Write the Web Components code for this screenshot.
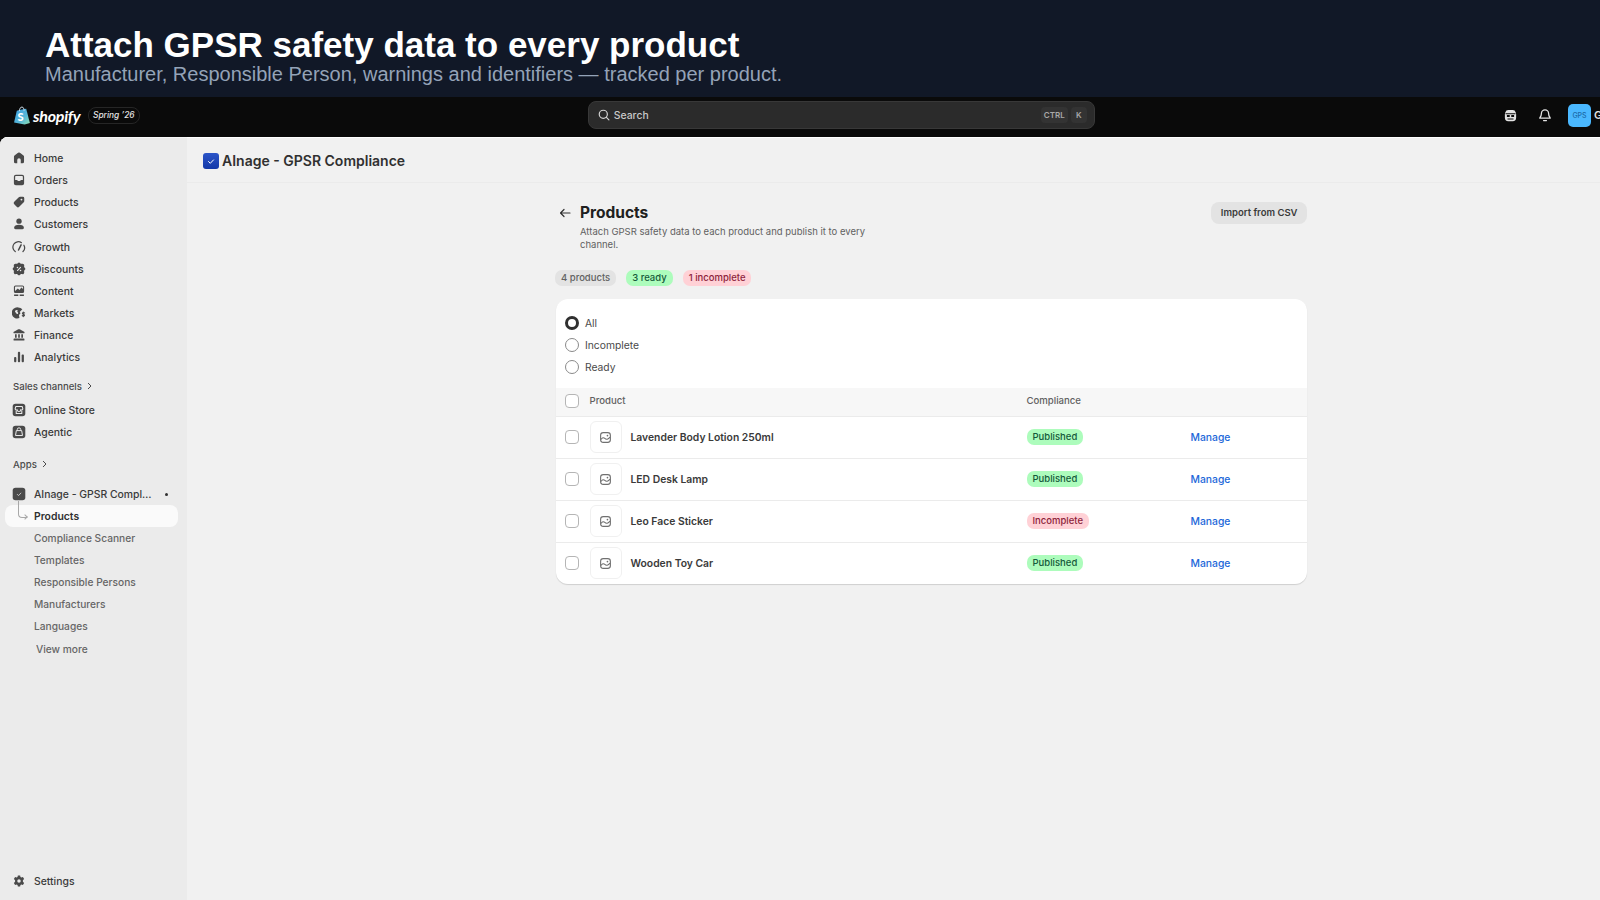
<!doctype html>
<html lang="en">
<head>
<meta charset="utf-8">
<title>GPSR Products</title>
<style>
  html, body { margin: 0; height: 100%; overflow: hidden; background: #0a0a0a; }
  body { font-family: Inter, "Liberation Sans", sans-serif; }
</style>
</head>
<body>
  <promo-banner heading="Attach GPSR safety data to every product" sub="Manufacturer, Responsible Person, warnings and identifiers — tracked per product."></promo-banner>
  <admin-topbar></admin-topbar>
  <admin-shell>
    <admin-nav slot="nav"></admin-nav>
    <app-title></app-title>
    <products-page></products-page>
  </admin-shell>

<script>
  const ICONS = {
    home: '<path fill="currentColor" d="M8.6 2.6a2.2 2.2 0 0 1 2.8 0l5 4a2.2 2.2 0 0 1 .8 1.7v7A2.2 2.2 0 0 1 15 17.500h-2.500v-4.500a2.500 2.500 0 0 0-5 0v4.500H5a2.200 2.200 0 0 1-2.200-2.200v-7a2.200 2.200 0 0 1 .8-1.700z"/>',
    orders: '<path fill="currentColor" fill-rule="evenodd" d="M5.500 2.500h9A2.800 2.800 0 0 1 17.300 5.300v9.400a2.800 2.800 0 0 1-2.800 2.800h-9a2.800 2.800 0 0 1-2.800-2.800V5.300A2.800 2.800 0 0 1 5.500 2.500zm-1 7.500h3l.8 1.500h3.400l.8-1.500h3V5.300a1 1 0 0 0-1-1h-9a1 1 0 0 0-1 1z"/>',
    tag: '<path fill="currentColor" fill-rule="evenodd" d="M11.500 2.500H15.500a2 2 0 0 1 2 2v4a2.500 2.500 0 0 1-.7 1.800l-6.500 6.500a2.500 2.500 0 0 1-3.600 0l-3.500-3.500a2.500 2.500 0 0 1 0-3.600l6.500-6.500a2.500 2.500 0 0 1 1.800-.7zm2 5.400a1.300 1.300 0 1 0 0-2.700 1.300 1.300 0 0 0 0 2.700z"/>',
    person: '<circle cx="10" cy="6" r="3.800" fill="currentColor"/><path fill="currentColor" d="M3 15.500c0-3 2.800-4.500 7-4.500s7 1.500 7 4.500c0 1.200-.8 2-2 2H5c-1.200 0-2-.8-2-2z"/>',
    gauge: '<path fill="none" stroke="currentColor" stroke-width="1.800" stroke-linecap="round" d="M4.600 16.500A7.500 7.500 0 0 1 13.500 3.800M17 7.500a7.500 7.500 0 0 1-1.300 9"/><path fill="none" stroke="currentColor" stroke-width="2.200" stroke-linecap="round" d="M9.300 14.300 13 7"/>',
    discount: '<path fill="currentColor" fill-rule="evenodd" d="M8.300 1.700a2.400 2.400 0 0 1 3.400 0l1 .9 1.800-.1a2.400 2.400 0 0 1 2.900 2.900l-.1 1.800.9 1a2.400 2.400 0 0 1 0 3.400l-.9 1 .1 1.800a2.400 2.400 0 0 1-2.900 2.900l-1.800-.1-1 .9a2.400 2.400 0 0 1-3.400 0l-1-.9-1.800.1a2.400 2.400 0 0 1-2.900-2.900l.1-1.800-.9-1a2.400 2.400 0 0 1 0-3.400l.9-1-.1-1.800A2.400 2.400 0 0 1 5.500 2.500l1.800.1zM7.800 6.800a1.100 1.100 0 1 0 0 2.200 1.100 1.100 0 0 0 0-2.200zm4.400 4.200a1.100 1.100 0 1 0 0 2.200 1.100 1.100 0 0 0 0-2.200zm.5-3.800a.8.800 0 0 0-1.100 0L7.300 11.700a.8.800 0 0 0 1.100 1.100l4.300-4.500a.8.800 0 0 0 0-1.100z"/>',
    content: '<path fill="currentColor" fill-rule="evenodd" d="M5 2h10a2.300 2.300 0 0 1 2.300 2.300v6.400a2.300 2.300 0 0 1-2.300 2.300H5a2.300 2.300 0 0 1-2.300-2.300V4.300A2.300 2.300 0 0 1 5 2zm-.7 8 4-3.500 2.500 2 2.500-3.500 2.500 2V4.300a.7.700 0 0 0-.7-.7H5a.7.700 0 0 0-.7.700z"/><path fill="currentColor" d="M3 15h6v2H3zM11 15h6v2h-6z"/>',
    globe: '<path fill="currentColor" fill-rule="evenodd" d="M9 2a8 8 0 0 1 5.800 2.500L11 8.500l1.200 1.800-2.200 2.500.6 4.500A8 8 0 1 1 9 2zm-3.500 3.600L4.200 8l2.300 3 2 .6.400-2.100-1.400-1.500.8-2z"/><path fill="none" stroke="currentColor" stroke-width="1.600" stroke-linecap="round" d="M18 10c-.4-.7-2.800-.9-3.100.4-.3 1.500 3.200 1.300 3 2.900-.2 1.300-2.600 1.200-3.200.4M16.200 8.500v6.600"/>',
    bank: '<path fill="currentColor" d="M9 1.900a2 2 0 0 1 2 0l6.300 3.600a1.100 1.100 0 0 1-.5 2.100H3.200a1.100 1.100 0 0 1-.5-2.100zM4.300 9h2.400v4.800H4.300zM8.800 9h2.400v4.800H8.800zM13.300 9h2.400v4.800h-2.400zM3.200 15h13.600a1 1 0 0 1 1 1v1a1 1 0 0 1-1 1H3.200a1 1 0 0 1-1-1v-1a1 1 0 0 1 1-1z"/>',
    bars: '<rect x="3" y="10" width="3.200" height="7.500" rx="1.300" fill="currentColor"/><rect x="8.400" y="2.500" width="3.200" height="15" rx="1.300" fill="currentColor"/><rect x="13.800" y="6.500" width="3.200" height="11" rx="1.300" fill="currentColor"/>',
    store: '<rect x="1" y="1" width="18" height="18" rx="4" fill="currentColor"/><path fill="none" stroke="#ebebeb" stroke-width="1.500" stroke-linejoin="round" d="M5.500 5h9l1 3.500a1.800 1.800 0 0 1-3 1 2.200 2.200 0 0 1-5 0 1.800 1.800 0 0 1-3-1zM6 11v4h8v-4"/>',
    agent: '<rect x="1" y="1" width="18" height="18" rx="4" fill="currentColor"/><path fill="none" stroke="#ebebeb" stroke-width="1.400" stroke-linejoin="round" d="M7.500 8V6.500a2.500 2.500 0 0 1 5 0V8M6.200 8h7.600l1.200 7H5z"/>',
    app: '<rect x="1" y="1" width="18" height="18" rx="4" fill="currentColor"/><path fill="none" stroke="#d4d4d4" stroke-width="1.200" stroke-linecap="round" stroke-linejoin="round" d="m7.500 10.500 1.800 1.800 3.400-3.600"/>',
    gear: '<path fill="currentColor" fill-rule="evenodd" d="M8.400 2h3.200l.5 2.300 1.300.7 2.200-.8 1.700 3-1.700 1.600v2.400l1.700 1.600-1.700 3-2.200-.8-1.300.7-.5 2.300H8.400l-.5-2.300-1.300-.7-2.200.8-1.700-3 1.700-1.600V8.800L2.700 7.200l1.700-3 2.200.8 1.300-.7zM10 12.500a2.500 2.500 0 1 0 0-5 2.500 2.500 0 0 0 0 5z"/>'
  };

  // small base class, every element just sets its shadow html once
  class Shadowed extends HTMLElement {
    connectedCallback() {
      if (this.shadowRoot) return;
      this.attachShadow({ mode: 'open' }).innerHTML = this.render();
    }
  }

  class PromoBanner extends Shadowed {
    render() {
      return `<style>
        :host { display: block; height: 97px; box-sizing: border-box; padding: 25px 45px 0; background: #111827; font-family: "Liberation Sans", Arial, sans-serif; overflow: hidden; }
        h1 { margin: 0; font-size: 35px; line-height: 39px; font-weight: 700; color: #fff; }
        p { margin: 0; font-size: 20px; line-height: 21px; color: #94a3b8; }
      </style>
      <h1>${this.getAttribute('heading')}</h1>
      <p>${this.getAttribute('sub')}</p>`;
    }
  }

  class AdminTopbar extends Shadowed {
    render() {
      return `<style>
        :host { display: grid; grid-template-columns: 1fr 507px 1fr; align-items: center; width: 1683px; height: 40px; box-sizing: border-box; padding: 0 14px 4px 13.500px; background: #0a0a0a; color: #e3e3e3; }
        .brand { display: flex; align-items: center; }
        .word { font: italic 700 16px Lato, sans-serif; color: #fff; margin-left: 2.500px; letter-spacing: -.25px; }
        .season { margin-left: 7.500px; height: 15px; padding: 0 4px; border: 1px solid #262626; border-radius: 8px; font: italic 500 8.400px/15px Inter, sans-serif; color: #e3e3e3; }
        .search { display: flex; align-items: center; gap: 3px; height: 28px; box-sizing: border-box; padding: 0 7px 0 8px; background: #2b2b2b; border: 1px solid #383838; border-radius: 8px; font-size: 10.400px; font-weight: 500; color: #c9c9c9; }
        .search span.t { flex: 1; }
        kbd { font: 600 8px/16px Inter, sans-serif; color: #a8a8a8; background: #333; border-radius: 4px; padding: 0 3px; min-width: 10px; text-align: center; }
        .right { display: flex; align-items: center; justify-content: flex-end; }
        .right svg { display: block; }
        .avatar { width: 23px; height: 23px; margin-left: 15.500px; border-radius: 5px; background: #4ab8ff; color: #1a6aa8; font: 500 7px/23px Inter, sans-serif; text-align: center; }
        .who { margin-left: 3px; width: 75px; font-size: 11px; font-weight: 600; color: #e3e3e3; }
      </style>
      <div class="brand">
        <svg width="17" height="19" viewBox="0 0 16 18">
          <defs><linearGradient id="bag" x1="0" y1="0" x2="1" y2="1"><stop offset="0" stop-color="#3b9be0"/><stop offset=".6" stop-color="#58b8d8"/><stop offset="1" stop-color="#8fe0b0"/></linearGradient></defs>
          <path fill="url(#bag)" d="M2.600 4.600 6 3.500l5.500-1L15 16.200 10 17.600 0 15.700z"/>
          <path fill="none" stroke="#d6e6f2" stroke-width=".9" d="M5 5c0-2.500 1.200-4 2.500-4s2 1.500 2 3.500"/>
          <text x="3.300" y="14" font-family="Lato, sans-serif" font-weight="900" font-size="10.500" fill="#fff">S</text>
        </svg>
        <span class="word">shopify</span>
        <span class="season">Spring ’26</span>
      </div>
      <div class="search">
        <svg width="14" height="14" viewBox="0 0 20 20" fill="none" stroke="#d4d4d4" stroke-width="1.700" stroke-linecap="round"><circle cx="9" cy="9" r="5.800"/><path d="m13.500 13.500 3.500 3.500"/></svg>
        <span class="t">Search</span><kbd>CTRL</kbd><kbd>K</kbd>
      </div>
      <div class="right">
        <svg width="15" height="15" viewBox="0 0 20 20" style="margin-right:18.500px"><path fill="#e3e3e3" d="M7 2.500h6a4 4 0 0 1 3.800 3l.7 3V13a4.500 4.500 0 0 1-4.500 4.500H7A4.500 4.500 0 0 1 2.500 13V8.500l.7-3a4 4 0 0 1 3.800-3z"/><path fill="#0a0a0a" d="M3.500 7h13v1.300h-13zM5.200 9.300h3.800v2.700H5.200zM11 9.300h3.800v2.700H11zM6 14h8v1.300H6z"/></svg>
        <svg width="16" height="16" viewBox="0 0 20 20" fill="none" stroke="#e3e3e3" stroke-width="1.600" stroke-linejoin="round" stroke-linecap="round"><path d="M5.500 8a4.500 4.500 0 0 1 9 0c0 3.500 2 5 2 6H3.500c0-1 2-2.500 2-6z"/><path d="M8.200 17h3.600"/></svg>
        <div class="avatar">GPS</div><div class="who">G</div>
      </div>`;
    }
  }

  class AdminShell extends Shadowed {
    render() {
      return `<style>
        :host { display: grid; grid-template-columns: 187px 1fr; width: 1683px; height: 763px; border-radius: 8px 8px 0 0; overflow: hidden; background: #f1f1f1; box-shadow: inset 0 1px 0 #fff; }
        .nav { background: #ebebeb; box-shadow: inset 0 1px 0 #f7f7f7; min-height: 0; }
        .main { min-width: 0; }
      </style>
      <div class="nav"><slot name="nav"></slot></div>
      <div class="main"><slot></slot></div>`;
    }
  }

  class NavItem extends Shadowed {
    render() {
      const ic = this.getAttribute('icon');
      return `<style>
        :host { display: flex; align-items: center; height: 22px; margin: 0 9.500px 0 5px; padding-left: 8px; border-radius: 8px; font-size: 10.400px; font-weight: 500; color: #3a3a3a; white-space: nowrap; }
        :host([sub]) { color: #666; padding-left: 29px; font-size: 10.200px; }
        :host([active]) { background: #fafafa; color: #303030; font-weight: 600; font-size: 10.400px; position: relative; }
        svg.i { width: 14px; height: 14px; margin-right: 8px; margin-left: -1px; color: #4a4a4a; flex: none; }
        .t { flex: 1; overflow: hidden; text-overflow: ellipsis; }
        .dot { width: 3px; height: 3px; border-radius: 50%; background: #303030; margin: 0 10px 0 12px; }
        .elbow { position: absolute; left: 13px; top: -4px; width: 8px; height: 16px; border-left: 1px solid #a8a8a8; border-bottom: 1px solid #a8a8a8; border-bottom-left-radius: 4px; }
        .elbow::after { content: ""; position: absolute; right: 0; bottom: -2px; width: 3px; height: 3px; border-top: 1px solid #a8a8a8; border-right: 1px solid #a8a8a8; transform: rotate(45deg); }
      </style>
      ${ic ? `<svg class="i" viewBox="0 0 20 20">${ICONS[ic]}</svg>` : ''}
      ${this.hasAttribute('active') ? '<span class="elbow"></span>' : ''}
      <span class="t"><slot></slot></span>
      ${this.hasAttribute('dot') ? '<span class="dot"></span>' : ''}`;
    }
  }

  class NavHeading extends Shadowed {
    render() {
      return `<style>
        :host { display: flex; align-items: center; gap: 4px; height: 20px; padding-left: 13px; font-size: 9.600px; font-weight: 500; color: #4a4a4a; }
      </style>
      <slot></slot>
      <svg width="7" height="8" viewBox="0 0 7 8" fill="none" stroke="#4a4a4a" stroke-width="1"><path d="m2 1 3 3-3 3"/></svg>`;
    }
  }

  class AdminNav extends Shadowed {
    render() {
      const main = [['home','Home'],['orders','Orders'],['tag','Products'],['person','Customers'],['gauge','Growth'],['discount','Discounts'],['content','Content'],['globe','Markets'],['bank','Finance'],['bars','Analytics']];
      const subs = ['Compliance Scanner','Templates','Responsible Persons','Manufacturers','Languages'];
      return `<style>
        :host { display: flex; flex-direction: column; height: 763px; box-sizing: border-box; padding: 10px 0 8px; }
        .g { display: flex; flex-direction: column; }
        .grow-row { margin-top: 1px; }
        .sales { margin-top: 8px; } .sc { margin-top: 3px; } .apps { margin-top: 11px; } .ag { margin-top: 9px; }
        .grow { flex: 1; }
      </style>
      <div class="g">${main.map(m => `<nav-item icon="${m[0]}"${m[0] === 'gauge' ? ' class="grow-row"' : ''}>${m[1]}</nav-item>`).join('')}</div>
      <nav-heading class="sales">Sales channels</nav-heading>
      <div class="g sc"><nav-item icon="store">Online Store</nav-item><nav-item icon="agent">Agentic</nav-item></div>
      <nav-heading class="apps">Apps</nav-heading>
      <div class="g ag">
        <nav-item icon="app" dot>AInage - GPSR Compli...</nav-item>
        <nav-item sub active>Products</nav-item>
        ${subs.map(s => `<nav-item sub>${s}</nav-item>`).join('')}
        <nav-item sub style="padding-left:31px;margin-top:1px">View more</nav-item>
      </div>
      <div class="grow"></div>
      <nav-item icon="gear">Settings</nav-item>`;
    }
  }

  class AppTitle extends Shadowed {
    render() {
      return `<style>
        :host { display: flex; align-items: center; gap: 3px; height: 46px; box-sizing: border-box; padding: 2px 0 0 16px; border-bottom: 1px solid #ebebeb; font-size: 14px; font-weight: 600; color: #303030; }
        .logo { width: 16px; height: 16px; border-radius: 3px; background: linear-gradient(#2c55c8, #1338a8); display: block; }
      </style>
      <svg class="logo" viewBox="0 0 16 16" fill="none" stroke="#fff" stroke-width="1" stroke-linecap="round" stroke-linejoin="round"><path d="m5.500 8.500 1.800 1.800 3.200-3.400"/></svg>
      <span>AInage - GPSR Compliance</span>`;
    }
  }

  class StatusPill extends Shadowed {
    render() {
      return `<style>
        :host { display: inline-block; height: 16px; padding: 0 6px; border-radius: 7px; font-size: 9.500px; font-weight: 450; line-height: 16px; background: #e3e3e3; color: #616161; white-space: nowrap; }
        :host([tone=ok]) { background: #adfcbc; color: #14593a; }
        :host([tone=bad]) { background: #ffd1d6; color: #8e1f3b; }
      </style><slot></slot>`;
    }
  }

  class RadioOption extends Shadowed {
    render() {
      return `<style>
        :host { display: flex; align-items: center; gap: 6.500px; height: 22px; font-size: 10.300px; color: #4a4a4a; }
        i { width: 14px; height: 14px; box-sizing: border-box; border-radius: 50%; border: 1.200px solid #8a8a8a; background: #fff; }
        :host([checked]) i { border: 3.500px solid #303030; }
      </style><i></i><slot></slot>`;
    }
  }

  class CheckBox extends Shadowed {
    render() {
      return `<style>
        :host { display: block; width: 14px; height: 14px; box-sizing: border-box; border: 1.200px solid #b5b5b5; border-radius: 4px; background: #fff; }
      </style>`;
    }
  }

  class ProductRow extends Shadowed {
    render() {
      const bad = this.getAttribute('status') === 'Incomplete';
      return `<style>
        :host { display: grid; grid-template-columns: 25px 41px 396px 164px 1fr; align-items: center; height: 42px; box-sizing: border-box; padding: 0 0 1px 8.500px; border-top: 1px solid #ebebeb; font-size: 10.350px; }
        .thumb { width: 32px; height: 32px; box-sizing: border-box; display: flex; align-items: center; justify-content: center; border: 1px solid #f0f0f0; border-radius: 6px; }
        .name { font-weight: 600; color: #3a3a3a; }
        a { color: #2167d9; text-decoration: none; font-weight: 450; }
      </style>
      <check-box></check-box>
      <div class="thumb"><svg width="13" height="13" viewBox="0 0 20 20" fill="none" stroke="#707070" stroke-width="1.700"><rect x="2.500" y="2.500" width="15" height="15" rx="4"/><path d="M3 13c2-3 4-3.500 6-1.500s5 1.500 8-2"/><circle cx="13" cy="7" r="1.300" fill="#707070" stroke="none"/></svg></div>
      <div class="name"><slot></slot></div>
      <div><status-pill tone="${bad ? 'bad' : 'ok'}">${this.getAttribute('status')}</status-pill></div>
      <a href="#">Manage</a>`;
    }
  }

  class ProductsPage extends Shadowed {
    render() {
      return `<style>
        :host { display: block; width: 752px; margin-left: 368px; padding-top: 19px; color: #303030; }
        .head { display: flex; align-items: flex-start; }
        .back { width: 12px; height: 12px; margin: 5px 9px 0 4px; flex: none; }
        .titles { flex: 1; }
        h2 { margin: 1px 0 0; font-size: 15.500px; line-height: 20px; font-weight: 650; color: #202020; }
        .sub { margin: 2px 0 0; width: 300px; font-size: 9.500px; line-height: 13px; color: #616161; }
        button { height: 22px; padding: 0 9.500px 1px; border: 0; border-radius: 8px; background: #e3e3e3; font: 600 9.500px Inter, sans-serif; color: #3a3a3a; }
        .pills { display: flex; gap: 10px; margin-top: 19px; }
        .card { margin: 13px 0 0 1px; width: 751px; background: #fff; border-radius: 12px; box-shadow: 0 1px 1px rgba(0,0,0,.14); overflow: hidden; }
        .radios { display: flex; flex-direction: column; padding: 12.500px 8.500px 10.500px; }
        .th { display: grid; grid-template-columns: 25px 437px 1fr; align-items: center; height: 28px; padding: 0 0 3px 8.500px; background: #f7f7f7; font-size: 9.600px; font-weight: 500; color: #616161; box-sizing: border-box; }
      </style>
      <div class="head">
        <svg class="back" viewBox="0 0 12 12" fill="none" stroke="#303030" stroke-width="1.200" stroke-linecap="round" stroke-linejoin="round"><path d="M11 6H1.500M5 2.500 1.500 6 5 9.500"/></svg>
        <div class="titles">
          <h2>Products</h2>
          <p class="sub">Attach GPSR safety data to each product and publish it to every channel.</p>
        </div>
        <button>Import from CSV</button>
      </div>
      <div class="pills">
        <status-pill>4 products</status-pill>
        <status-pill tone="ok">3 ready</status-pill>
        <status-pill tone="bad">1 incomplete</status-pill>
      </div>
      <div class="card">
        <div class="radios">
          <radio-option checked>All</radio-option>
          <radio-option>Incomplete</radio-option>
          <radio-option>Ready</radio-option>
        </div>
        <div class="th"><check-box></check-box><span>Product</span><span>Compliance</span></div>
        <product-row status="Published">Lavender Body Lotion 250ml</product-row>
        <product-row status="Published">LED Desk Lamp</product-row>
        <product-row status="Incomplete">Leo Face Sticker</product-row>
        <product-row status="Published">Wooden Toy Car</product-row>
      </div>`;
    }
  }

  customElements.define('promo-banner', PromoBanner);
  customElements.define('admin-topbar', AdminTopbar);
  customElements.define('admin-shell', AdminShell);
  customElements.define('nav-item', NavItem);
  customElements.define('nav-heading', NavHeading);
  customElements.define('admin-nav', AdminNav);
  customElements.define('app-title', AppTitle);
  customElements.define('status-pill', StatusPill);
  customElements.define('radio-option', RadioOption);
  customElements.define('check-box', CheckBox);
  customElements.define('product-row', ProductRow);
  customElements.define('products-page', ProductsPage);
</script>
</body>
</html>
